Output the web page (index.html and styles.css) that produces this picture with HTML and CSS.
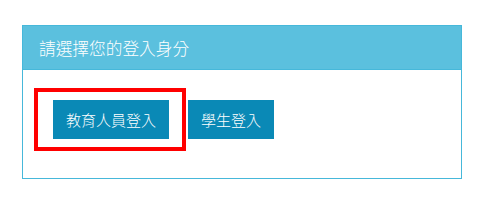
FILE: index.html
```html
<!DOCTYPE html>
<html lang="zh-Hant">
<head>
  <meta charset="UTF-8">
  <meta name="viewport" content="width=device-width, initial-scale=1.0">
  <title>登入身分</title>
  <link rel="stylesheet" href="styles.css">
</head>
<body>
  <div class="panel">
    <div class="panel-heading">請選擇您的登入身分</div>
    <div class="panel-body">
      <a href="#" class="btn btn-login marked">教育人員登入<span class="mark"></span></a>
      <a href="#" class="btn btn-login">學生登入</a>
    </div>
  </div>
</body>
</html>
```

FILE: styles.css
```css
* {
  margin: 0;
  padding: 0;
  box-sizing: border-box;
}

body {
  font-family: "Noto Sans CJK TC", "Liberation Sans", sans-serif;
  background: #fff;
  padding: 25px 0 0 22px;
}

.panel {
  width: 440px;
  height: 154px;
  border: 1px solid #46b8da;
  background: #fff;
}

.panel-heading {
  height: 44px;
  background: #5bc0de;
  border-bottom: 1px solid #46b8da;
  color: #fff;
  font-size: 16.7px;
  line-height: 44px;
  padding-left: 16px;
  font-weight: 300;
}

.panel-body {
  display: flex;
  gap: 19px;
  padding: 30px 0 0 30px;
}

.btn {
  display: inline-block;
  text-decoration: none;
  color: #fff;
  font-size: 15px;
  font-weight: 300;
  height: 39px;
  line-height: 39px;
  padding: 0 13px;
}

.btn-login {
  background: #0a89b6;
}

.marked {
  position: relative;
}

.mark {
  position: absolute;
  left: -19px;
  top: -12px;
  width: 152px;
  height: 63px;
  border: 4px solid #f00;
}
```
